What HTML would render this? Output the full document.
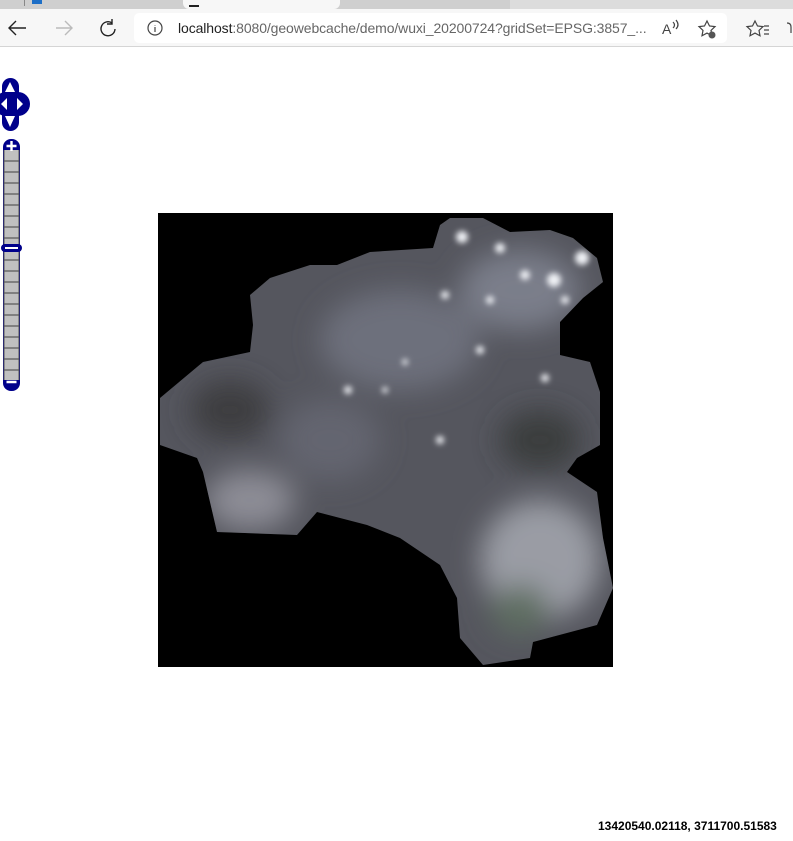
<!DOCTYPE html>
<html><head><meta charset="utf-8"><style>
*{margin:0;padding:0;box-sizing:border-box}
body{width:793px;height:841px;background:#fff;position:relative;overflow:hidden;font-family:"Liberation Sans",sans-serif}
.tabs{position:absolute;left:0;top:0;width:793px;height:9px;background:#cfcfcf}
.tab{position:absolute;top:0;height:9px;background:#f7f7f7;left:183px;width:157px;border-radius:0 0 6px 6px}
.tb{position:absolute;left:0;top:9px;width:793px;height:38px;background:#f7f7f7;border-bottom:1px solid #d5d5d5}
.addr{position:absolute;left:134px;top:13px;width:593px;height:30px;background:#fff;border-radius:5px}
.url{position:absolute;left:178px;top:20px;font-size:14px;color:#666;white-space:nowrap;letter-spacing:-0.1px}
.url b{font-weight:normal;color:#222}
.coord{position:absolute;left:598px;top:819px;font-size:12px;font-weight:bold;color:#000}
</style></head><body>
<div class="tabs"><div style="position:absolute;left:24px;top:0;width:1px;height:6px;background:#888"></div><div style="position:absolute;left:32px;top:0;width:10px;height:4px;background:#1d6fc7"></div><div class="tab"><div style="position:absolute;left:6px;top:5px;width:10px;height:2px;background:#222"></div></div><div style="position:absolute;left:510px;top:0;width:283px;height:9px;background:#dcdcdc"></div></div>
<div class="tb"></div>
<svg style="position:absolute;left:0;top:9px" width="793" height="38" fill="none" stroke="#222" stroke-width="1.4">
<path d="M26 19H10M16 12l-7 7 7 7"/>
<path d="M72 19H56M65 12l7 7-7 7" stroke="#bbb"/>
<path d="M112 14a7 7 0 1 0 3 6M112 10v5h-5"/>
</svg>
<div class="addr"></div>
<svg style="position:absolute;left:0;top:9px" width="793" height="38" fill="none" stroke="#444" stroke-width="1.2">
<circle cx="155" cy="19" r="7"/><path d="M155 16v0.5M155 18v5"/>
<text x="662" y="25" font-size="14" fill="#444" stroke="none" font-family="Liberation Sans">A</text><path d="M673 13q3 3 0 6M676 11q4 5 0 9"/>
<path d="M707 12l2.5 5 5.5.6-4 3.8 1 5.4-5-2.7-5 2.7 1-5.4-4-3.8 5.5-.6z"/><circle cx="712" cy="26" r="3.5" fill="#555" stroke="none"/>
<path d="M755 12l2.5 5 5.5.6-4 3.8 1 5.4-5-2.7-5 2.7 1-5.4-4-3.8 5.5-.6zM764 17h5M764 21h5M764 25h5"/>
<path d="M787 14q4 0 4 4v6"/>
</svg>
<div class="url"><b>localhost</b>:8080/geowebcache/demo/wuxi_20200724?gridSet=EPSG:3857_...</div>

<!-- pan/zoom control -->
<svg style="position:absolute;left:0;top:0" width="34" height="400">
<g fill="#00008b">
<rect x="2" y="78" width="17" height="53" rx="8.5"/>
<rect x="-6" y="92" width="36" height="24" rx="12"/>
</g>
<g fill="#fff">
<path d="M10 82L5 92H15Z"/>
<path d="M5 116H15L10 127Z"/>
<path d="M1 104L7 98V110Z"/>
<path d="M23 104L17 98V110Z"/>
</g>
<rect x="3" y="139" width="17" height="252" fill="#00008b" rx="8"/>
<rect x="4" y="150" width="15" height="230" fill="#c0c0c0"/>
<g stroke="#808080" stroke-width="2">
<path d="M4 161h15M4 172h15M4 183h15M4 194h15M4 205h15M4 216h15M4 227h15M4 238h15M4 260h15M4 271h15M4 282h15M4 293h15M4 304h15M4 315h15M4 326h15M4 337h15M4 348h15M4 359h15M4 370h15"/>
</g>
<path d="M4 150V380M19 150V380" stroke="#555" stroke-width="1"/>
<g stroke="#fff" stroke-width="2.4"><path d="M6.5 146h10M11.5 141v10M6.5 382h10"/></g>
<rect x="1" y="244" width="21" height="8" rx="4" fill="#00008b"/>
<path d="M5 248h13" stroke="#fff" stroke-width="2"/>
</svg>

<!-- map -->
<svg style="position:absolute;left:158px;top:213px" width="455" height="454" viewBox="158 213 455 454">
<defs>
<clipPath id="c"><path d="M450 218 L483 218 L510 232 L550 230 L573 238 L597 258 L603 282 L583 298 L560 322 L560 355 L590 362 L600 392 L600 445 L577 458 L567 472 L597 492 L603 538 L613 588 L597 625 L533 642 L530 658 L483 665 L460 638 L457 598 L440 565 L400 538 L367 525 L317 512 L297 535 L217 532 L203 472 L197 458 L160 445 L160 398 L203 362 L250 352 L253 325 L250 295 L270 278 L310 265 L337 265 L370 252 L433 248 L440 225Z"/></clipPath>
<filter id="bl"><feGaussianBlur stdDeviation="14"/></filter>
<filter id="bs"><feGaussianBlur stdDeviation="3"/></filter>
</defs>
<rect x="158" y="213" width="455" height="454" fill="#000"/>
<g clip-path="url(#c)">
<rect x="158" y="213" width="455" height="454" fill="#55565e"/>
<g filter="url(#bl)">
<ellipse cx="540" cy="560" rx="60" ry="60" fill="#9a9ca4"/>
<ellipse cx="250" cy="500" rx="45" ry="30" fill="#8c8c95"/>
<ellipse cx="400" cy="340" rx="80" ry="50" fill="#6d707c"/>
<ellipse cx="520" cy="290" rx="60" ry="40" fill="#7a7e8a"/>
<ellipse cx="230" cy="410" rx="40" ry="30" fill="#3e3c40"/>
<ellipse cx="540" cy="440" rx="40" ry="30" fill="#3a3c3e"/>
<ellipse cx="520" cy="610" rx="30" ry="25" fill="#5e6e62"/>
<ellipse cx="330" cy="440" rx="50" ry="40" fill="#64656f"/>
</g>
<g fill="#eef0f4" filter="url(#bs)">
<circle cx="462" cy="237" r="6"/><circle cx="500" cy="248" r="5"/><circle cx="582" cy="258" r="7"/><circle cx="554" cy="280" r="7"/><circle cx="525" cy="275" r="5"/><circle cx="490" cy="300" r="4"/><circle cx="445" cy="295" r="4"/><circle cx="480" cy="350" r="4"/><circle cx="545" cy="378" r="4"/><circle cx="405" cy="362" r="3"/><circle cx="348" cy="390" r="4"/><circle cx="385" cy="390" r="3"/><circle cx="440" cy="440" r="4"/><circle cx="565" cy="300" r="4"/>
</g>
</g>
</svg>

<div class="coord">13420540.02118, 3711700.51583</div>
</body></html>
